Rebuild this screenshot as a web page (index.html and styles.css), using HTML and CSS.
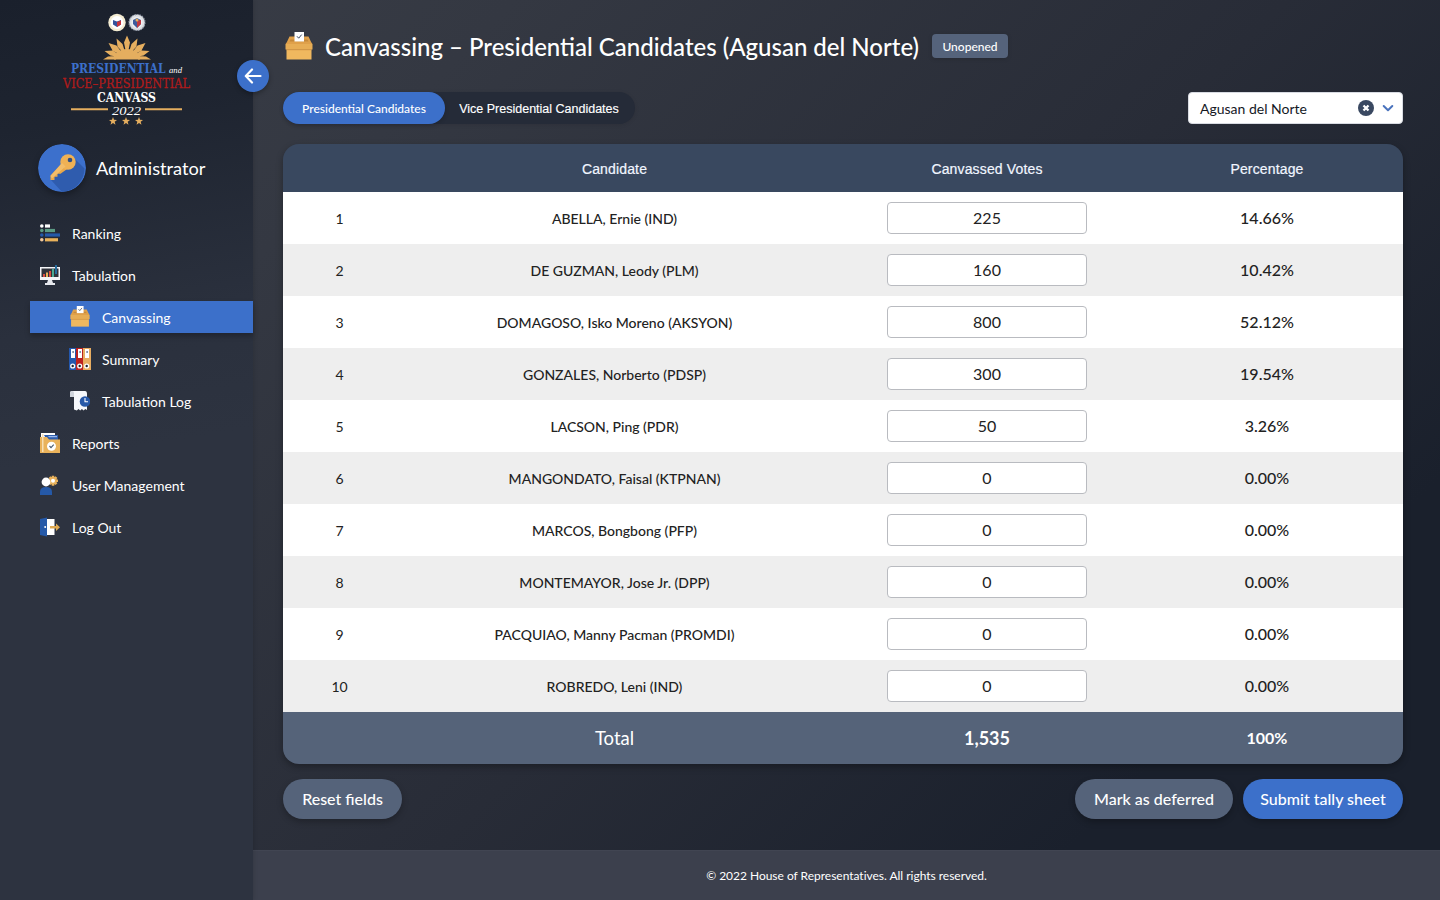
FILE: index.html
```html
<!DOCTYPE html>
<html lang="en">
<head>
<meta charset="utf-8">
<title>Canvassing – Presidential Candidates</title>
<link rel="stylesheet" href="styles.css">
</head>
<body>
<svg width="0" height="0" class="defs" aria-hidden="true">
  <symbol id="box" viewBox="0 0 28 28">
    <path d="M4.500 4.500h19L27 12H1z" fill="#e0a14b"/><path d="M5.500 7.500h17l1 2h-19z" fill="#c68a3c"/>
    <path d="M.5 12h27v5.500H.5z" fill="#e7ad55"/><path d="M.5 12l2-2h23l2 2z" fill="#dfa04a"/>
    <path d="M1.500 17.200h25V27.500h-25z" fill="#f0b85f"/><path d="M1.500 17.200h25v1h-25z" fill="#cf9344"/>
    <path d="M9.500 0h9.500v9.500H9.500z" fill="#fff"/><path d="M12 4.300l1.700 1.900 3-3.600" fill="none" stroke="#39465f" stroke-width="1"/>
  </symbol>
  <symbol id="star" viewBox="0 0 10 10"><path d="M5 0l1.300 3.500L10 3.700 7.100 6 8.100 9.700 5 7.600 1.900 9.700 2.900 6 0 3.700l3.700-.2z" fill="#e5ae5f"/></symbol>
</svg>
<div class="app">
  <aside class="sidebar">
    <svg class="logo" width="130" height="116" viewBox="0 0 130 116">
      <circle cx="54" cy="9.500" r="8.700" fill="#f4ecd2"/><circle cx="54" cy="9.500" r="6.400" fill="#fff"/>
      <path d="M50 7l4 1.500L58 7v4.500l-4 2.500-4-2.500z" fill="#34529b"/><path d="M54 9l4-1.500v4L54 14z" fill="#c7343b"/>
      <circle cx="74" cy="9.500" r="8" fill="#dde0e4" stroke="#8f97a5" stroke-width="1.200" stroke-dasharray="1.500 1"/><circle cx="74" cy="9.500" r="5.500" fill="#eef0f3"/>
      <path d="M70 7l4-2 4 2v4l-4 4-4-4z" fill="#3d5b9d"/><path d="M74 8l4-1v4l-4 4z" fill="#bf3940"/><circle cx="74" cy="7" r="1.500" fill="#e5ae5f"/>
      <g fill="#e5ae5f">
        <path d="M51 46.500a13 10.500 0 0 1 26 0z"/>
        <path d="M64 22.500l3 7-1.800 9h-2.400l-1.800-9zM53.500 25.500l6 5.500 2.500 8h-2.500l-5-5.500zM74.500 25.500l-6 5.500-2.500 8h2.500l5-5.500zM45.500 30l8 2.500 6 8-2 1.500-8-4.500zM82.500 30l-8 2.500-6 8 2 1.500 8-4.500zM41.500 38l8-.5 7 4.500-1 2-8-1.500zM86.500 38l-8-.5-7 4.500 1 2 8-1.500zM40 46.500l5-3 8-.5v3.500zM88 46.500l-5-3-8-.5v3.500z"/>
      </g>
      <text class="serif bold" x="8" y="60" font-size="12.300" textLength="94.500" lengthAdjust="spacingAndGlyphs" fill="#3c70ca">PRESIDENTIAL</text>
      <text class="serif italic" x="106" y="60" font-size="8" textLength="13" lengthAdjust="spacingAndGlyphs" fill="#fff">and</text>
      <text class="serif" x="0" y="74.500" font-size="12.300" textLength="127" lengthAdjust="spacingAndGlyphs" fill="#af1b1b" stroke="#af1b1b" stroke-width=".3">VICE–PRESIDENTIAL</text>
      <text class="serif bold" x="34" y="88.800" font-size="12.300" textLength="59" lengthAdjust="spacingAndGlyphs" fill="#fff">CANVASS</text>
      <text class="serif italic" x="49" y="101.500" font-size="12.500" textLength="29" lengthAdjust="spacingAndGlyphs" fill="#fff">2022</text>
      <path d="M8 96.300h37M82 96.300h37" stroke="#e5ae5f" stroke-width="2"/>
      <use href="#star" x="46" y="104" width="8" height="8"/><use href="#star" x="59" y="104" width="8" height="8"/><use href="#star" x="72" y="104" width="8" height="8"/>
    </svg>
    <div class="profile">
      <svg class="avatar" width="48" height="48" viewBox="0 0 48 48">
        <circle cx="24" cy="24" r="24" fill="#3c70cc"/>
        <path d="M36 14l10.500 10.500A24 24 0 0 1 24 48l-11-12z" fill="#2f5cae"/>
        <path d="M24 19L12.500 31.500V36h4v-3.200h3v-3h3l7-5z" fill="#e9a84a"/>
        <circle cx="30" cy="18" r="7.700" fill="#efb155"/><path d="M24 19l3.500 3.500L14 34.500 12.500 32z" fill="#f3bd6a"/><circle cx="32" cy="16" r="2.300" fill="#2e4d84"/>
      </svg>
      <span>Administrator</span>
    </div>
    <nav class="menu">
      <a class="item"><svg width="20" height="20" viewBox="0 0 20 20"><g stroke-width="3.200"><path d="M5 3h5" stroke="#fff"/><path d="M5 7.500h10" stroke="#5b9b83"/><path d="M5 12h15" stroke="#2559a8"/><path d="M5 16.800h13" stroke="#e9b25b"/></g><circle cx="1.800" cy="3" r="1.800" fill="#fff"/><circle cx="1.800" cy="7.500" r="1.800" fill="#5b9b83"/><circle cx="1.800" cy="12" r="1.800" fill="#2559a8"/><circle cx="1.800" cy="16.800" r="1.800" fill="#f3c99d"/></svg>Ranking</a>
      <a class="item"><svg width="20" height="20" viewBox="0 0 20 20"><path d="M0 2h20v13H0z" fill="#f4f5f8"/><path d="M1.500 3.500h17v8.500h-17z" fill="#30323b"/><path d="M3 12V9h2v3zM9 12V6h2v6z" fill="#d94c43"/><path d="M6 12V7.500h2V12z" fill="#e9b25b"/><path d="M12 12V4h2v8z" fill="#4caa91"/><path d="M15 9V0h2v9z" fill="#276b9b"/><path d="M8 15h4l1 3h2v2H5v-2h2z" fill="#e6e8ed"/></svg>Tabulation</a>
      <a class="item sub active"><svg width="20" height="21" viewBox="0 0 28 28" preserveAspectRatio="none"><use href="#box" width="28" height="28"/></svg>Canvassing</a>
      <a class="item sub"><svg width="22" height="22" viewBox="0 0 22 22"><path d="M0 0h7v22H0z" fill="#2458ae"/><path d="M7 0h7v22H7z" fill="#bb211f"/><path d="M14 0h8v22h-8z" fill="#e8ad61"/><path d="M2 1h4v9H2zM9 1h4v9H9zM16 1h4v9h-4z" fill="#fff"/><path d="M3.500 3h1.200v2H3.500zM10.500 3h1.200v2h-1.200zM17.500 3h1.200v2h-1.200z" fill="#526481"/><g fill="#1d2431" stroke="#fff" stroke-width="1.400"><circle cx="3.700" cy="18" r="1.900"/><circle cx="10.700" cy="18" r="1.900"/><circle cx="17.700" cy="18" r="1.900"/></g></svg>Summary</a>
      <a class="item sub"><svg width="20" height="20" viewBox="0 0 20 20"><path d="M2 0h13q2 0 2 3v16l-1.700-1-1.700 1.500-1.700-1.500-1.700 1.500L8.500 18l-1.700 1.500L4 18.500V6H0V2q0-2 2-2z" fill="#f5f7fb"/><path d="M0 6V2q0-2 2-2t2 2v4z" fill="#cfd4dc"/><circle cx="15" cy="10.500" r="5.300" fill="#2658a8"/><path d="M15 7v3.700h3" fill="none" stroke="#fff" stroke-width="1.100"/></svg>Tabulation Log</a>
      <a class="item"><svg width="20" height="20" viewBox="0 0 20 20"><path d="M1 0h14v10H1z" fill="#fff"/><path d="M4 2h14v7H8z" fill="#2d5dac"/><path d="M8 3h9v1.300H9z" fill="#9db9eb"/><path d="M0 4h7l2 2.500h11V20H0z" fill="#e9b25b"/><path d="M2 1h1.500v18H2z" fill="#f7dfb4"/><circle cx="11.500" cy="13.200" r="4.500" fill="#fff"/><path d="M9.500 13l1.500 1.600 2.700-3" fill="none" stroke="#465a73" stroke-width="1.100"/></svg>Reports</a>
      <a class="item"><svg width="20" height="20" viewBox="0 0 20 20"><g transform="translate(13 5.700)"><path d="M0-5v10M-5 0H5M-3.500-3.500l7 7M3.500-3.500l-7 7" stroke="#e9b25b" stroke-width="2.600"/><circle r="3.700" fill="#e9b25b"/><circle r="2" fill="#fff"/></g><circle cx="6" cy="7" r="4.400" fill="#fff"/><path d="M0 20v-3q0-5 6-5t6 5v3z" fill="#2559a8"/></svg>User Management</a>
      <a class="item"><svg width="20" height="20" viewBox="0 0 20 20"><path d="M6 2h8.500v16H6z" fill="#fff"/><path d="M0 2l7-1.500v19L0 18z" fill="#2559a8"/><circle cx="5.200" cy="10" r="1" fill="#fff"/><path d="M10 9h6V6.500l4 3.800-4 3.800v-2.600h-6z" fill="#dfa950"/></svg>Log Out</a>
    </nav>
    <button class="collapse" aria-label="Collapse sidebar"><svg width="18" height="16" viewBox="0 0 18 16"><path d="M8 1.500L1.800 8 8 14.500M2 8h14.500" fill="none" stroke="#fff" stroke-width="2.200" stroke-linecap="round" stroke-linejoin="round"/></svg></button>
  </aside>
  <div class="page">
    <main>
      <header class="heading">
        <svg width="28" height="28"><use href="#box"/></svg>
        <h1>Canvassing – Presidential Candidates (Agusan del Norte)</h1>
        <span class="badge">Unopened</span>
      </header>
      <div class="toolbar">
        <div class="tabs"><button class="tab selected">Presidential Candidates</button><button class="tab other">Vice Presidential Candidates</button></div>
        <div class="select"><span>Agusan del Norte</span>
          <svg width="16" height="16" viewBox="0 0 16 16"><circle cx="8" cy="8" r="8" fill="#394861"/><path d="M5.500 5.500l5 5M10.500 5.500l-5 5" stroke="#fff" stroke-width="2.300"/></svg>
          <svg width="12" height="8" viewBox="0 0 12 8"><path d="M1.700 2L6 6.200 10.300 2" fill="none" stroke="#4a73bd" stroke-width="2" stroke-linecap="round" stroke-linejoin="round"/></svg>
        </div>
      </div>
      <section class="table">
        <div class="row head"><span></span><span>Candidate</span><span>Canvassed Votes</span><span>Percentage</span></div>
        <div class="row"><span>1</span><span class="name">ABELLA, Ernie (IND)</span><span><input value="225"></span><span class="pct">14.66%</span></div>
        <div class="row"><span>2</span><span class="name">DE GUZMAN, Leody (PLM)</span><span><input value="160"></span><span class="pct">10.42%</span></div>
        <div class="row"><span>3</span><span class="name">DOMAGOSO, Isko Moreno (AKSYON)</span><span><input value="800"></span><span class="pct">52.12%</span></div>
        <div class="row"><span>4</span><span class="name">GONZALES, Norberto (PDSP)</span><span><input value="300"></span><span class="pct">19.54%</span></div>
        <div class="row"><span>5</span><span class="name">LACSON, Ping (PDR)</span><span><input value="50"></span><span class="pct">3.26%</span></div>
        <div class="row"><span>6</span><span class="name">MANGONDATO, Faisal (KTPNAN)</span><span><input value="0"></span><span class="pct">0.00%</span></div>
        <div class="row"><span>7</span><span class="name">MARCOS, Bongbong (PFP)</span><span><input value="0"></span><span class="pct">0.00%</span></div>
        <div class="row"><span>8</span><span class="name">MONTEMAYOR, Jose Jr. (DPP)</span><span><input value="0"></span><span class="pct">0.00%</span></div>
        <div class="row"><span>9</span><span class="name">PACQUIAO, Manny Pacman (PROMDI)</span><span><input value="0"></span><span class="pct">0.00%</span></div>
        <div class="row"><span>10</span><span class="name">ROBREDO, Leni (IND)</span><span><input value="0"></span><span class="pct">0.00%</span></div>
        <div class="row total"><span></span><span class="label">Total</span><span class="sum">1,535</span><span class="full">100%</span></div>
      </section>
      <div class="actions"><button class="btn reset">Reset fields</button><button class="btn defer">Mark as deferred</button><button class="btn submit">Submit tally sheet</button></div>
    </main>
    <footer>© 2022 House of Representatives. All rights reserved.</footer>
  </div>
</div>
</body>
</html>
```
FILE: styles.css
```css
* { box-sizing: border-box; }
body { margin: 0; font-family: Lato, "Liberation Sans", sans-serif; color: #fff; font-size: 14px; }
button, input { font: inherit; color: inherit; border: 0; padding: 0; margin: 0; }
svg { display: block; flex: none; }
.defs { position: absolute; }
.app { display: flex; width: 1440px; height: 900px; overflow: hidden; background: linear-gradient(135deg, #3a3e47 0%, #343842 22%, #282c37 55%, #1a202c 82%, #1a202c 100%); }

.sidebar { position: relative; width: 253px; flex: none; display: flex; flex-direction: column; background: linear-gradient(170deg, #1a202c 0%, #1e2430 14%, #2a303d 36%, #2d3340 50%, #2d3340 100%); box-shadow: 1px 0 4px rgba(0,0,0,.12); }
.logo { margin: 13px 0 0 63px; overflow: visible; }
.serif { font-family: "DejaVu Serif", "Liberation Serif", serif; }
.bold { font-weight: 700; }
.italic { font-family: "Liberation Serif", serif; font-style: italic; }
.profile { display: flex; align-items: center; gap: 10px; margin: 15px 0 0 38px; height: 48px; font-size: 18.200px; }
.avatar { border-radius: 50%; box-shadow: 0 3px 6px rgba(0,0,0,.3); }
.menu { display: flex; flex-direction: column; gap: 10px; padding: 26px 0 0 30px; }
.item { display: flex; align-items: center; gap: 12px; height: 32px; padding: 0 0 1px 10px; font-size: 14px; }
.item svg { margin-top: -2px; }
.item.sub { padding-left: 40px; }
.sub svg[width="22"] { margin-left: -1px; margin-right: -1px; }
.item.active { background: #3c70ca; box-shadow: 0 3px 5px rgba(0,0,0,.25); margin-top: -1px; margin-bottom: 1px; padding-top: 1px; padding-bottom: 0; }
.collapse { position: absolute; left: 237px; top: 60px; width: 32px; height: 32px; border-radius: 50%; background: #3c70ca; display: flex; align-items: center; justify-content: center; box-shadow: 0 2px 5px rgba(0,0,0,.3); }

.page { flex: 1; display: flex; flex-direction: column; }
main { flex: 1; padding: 32px 37px 0 30px; }
.heading { display: flex; align-items: center; height: 28px; padding-left: 2px; }
h1 { width: 596px; margin: 1px 11px 0 12px; font-size: 24px; line-height: 28px; font-weight: 500; white-space: nowrap; }
.badge { height: 24px; width: 76px; text-align: center; line-height: 25px; font-size: 12px; font-weight: 500; background: #55637b; border-radius: 4px; box-shadow: 0 1px 4px rgba(0,0,0,.15); }
.toolbar { display: flex; justify-content: space-between; margin-top: 32px; height: 32px; }
.tabs { display: flex; width: 352px; background: #252b38; border-radius: 16px; box-shadow: 0 1px 4px rgba(0,0,0,.1); }
.tab { background: none; font-size: 12px; padding-top: 2px; }
.selected { width: 162px; padding-top: 0; font-weight: 500; border-radius: 16px; background: #3c70ca; box-shadow: 0 2px 4px rgba(0,0,0,.15); }
.other { width: 188px; font-family: "Liberation Sans", Arial, sans-serif; font-size: 12.500px; -webkit-text-stroke: .15px #fff; }
.select { display: flex; align-items: center; width: 215px; height: 32px; padding: 0 10px 0 12px; background: #fff; border: 1px solid #d8dbe2; border-radius: 4px; color: #15181f; font-size: 14px; }
.select span { flex: 1; padding-top: 1px; margin-left: -1px; }
.select svg + svg { margin-left: 8px; margin-right: -2px; }

.table { margin-top: 20px; border-radius: 16px; overflow: hidden; box-shadow: 0 3px 7px rgba(0,0,0,.3); }
.row { display: grid; grid-template-columns: 113px 437px 308px 252px; height: 52px; align-items: center; text-align: center; background: #fff; color: #222; }
.row:nth-child(odd) { background: #eee; }
.row > span { padding-bottom: 0; }
.row.head { height: 48px; background: #39485f; color: #f1f6ff; font-family: "Liberation Sans", Arial, sans-serif; font-size: 14px; letter-spacing: .15px; -webkit-text-stroke: .2px #f1f6ff; }
.row.head > span { padding-top: 2px; }
.name { font-weight: 500; }
.row input { display: block; width: 200px; height: 32px; margin: 0 auto; padding-bottom: 2px; text-align: center; background: #fff; border: 1px solid #b9bbc0; border-radius: 4px; font-size: 16px; }
.row .pct { font-size: 16px; font-weight: 500; padding-bottom: 2px; }
.row.total { background: #556379; color: #fff; }
.row .label { font-size: 18.500px; }
.row .sum { font-size: 18px; font-weight: 700; }
.row .full { font-size: 16px; font-weight: 700; padding-bottom: 1px; }
.actions { display: flex; gap: 10px; margin-top: 15px; }
.btn { height: 40px; border-radius: 20px; background: #55637a; font-size: 16px; font-weight: 500; padding-bottom: 1px; box-shadow: 0 3px 6px rgba(0,0,0,.25); }
.reset { width: 119px; margin-right: auto; }
.defer { width: 158px; }
.submit { width: 160px; background: #3c70ca; }
footer { height: 50px; background: #3c404d; border-top: 1px solid #414552; text-align: center; line-height: 49px; font-size: 12px; letter-spacing: -.02px; font-variant-ligatures: common-ligatures; }
```
